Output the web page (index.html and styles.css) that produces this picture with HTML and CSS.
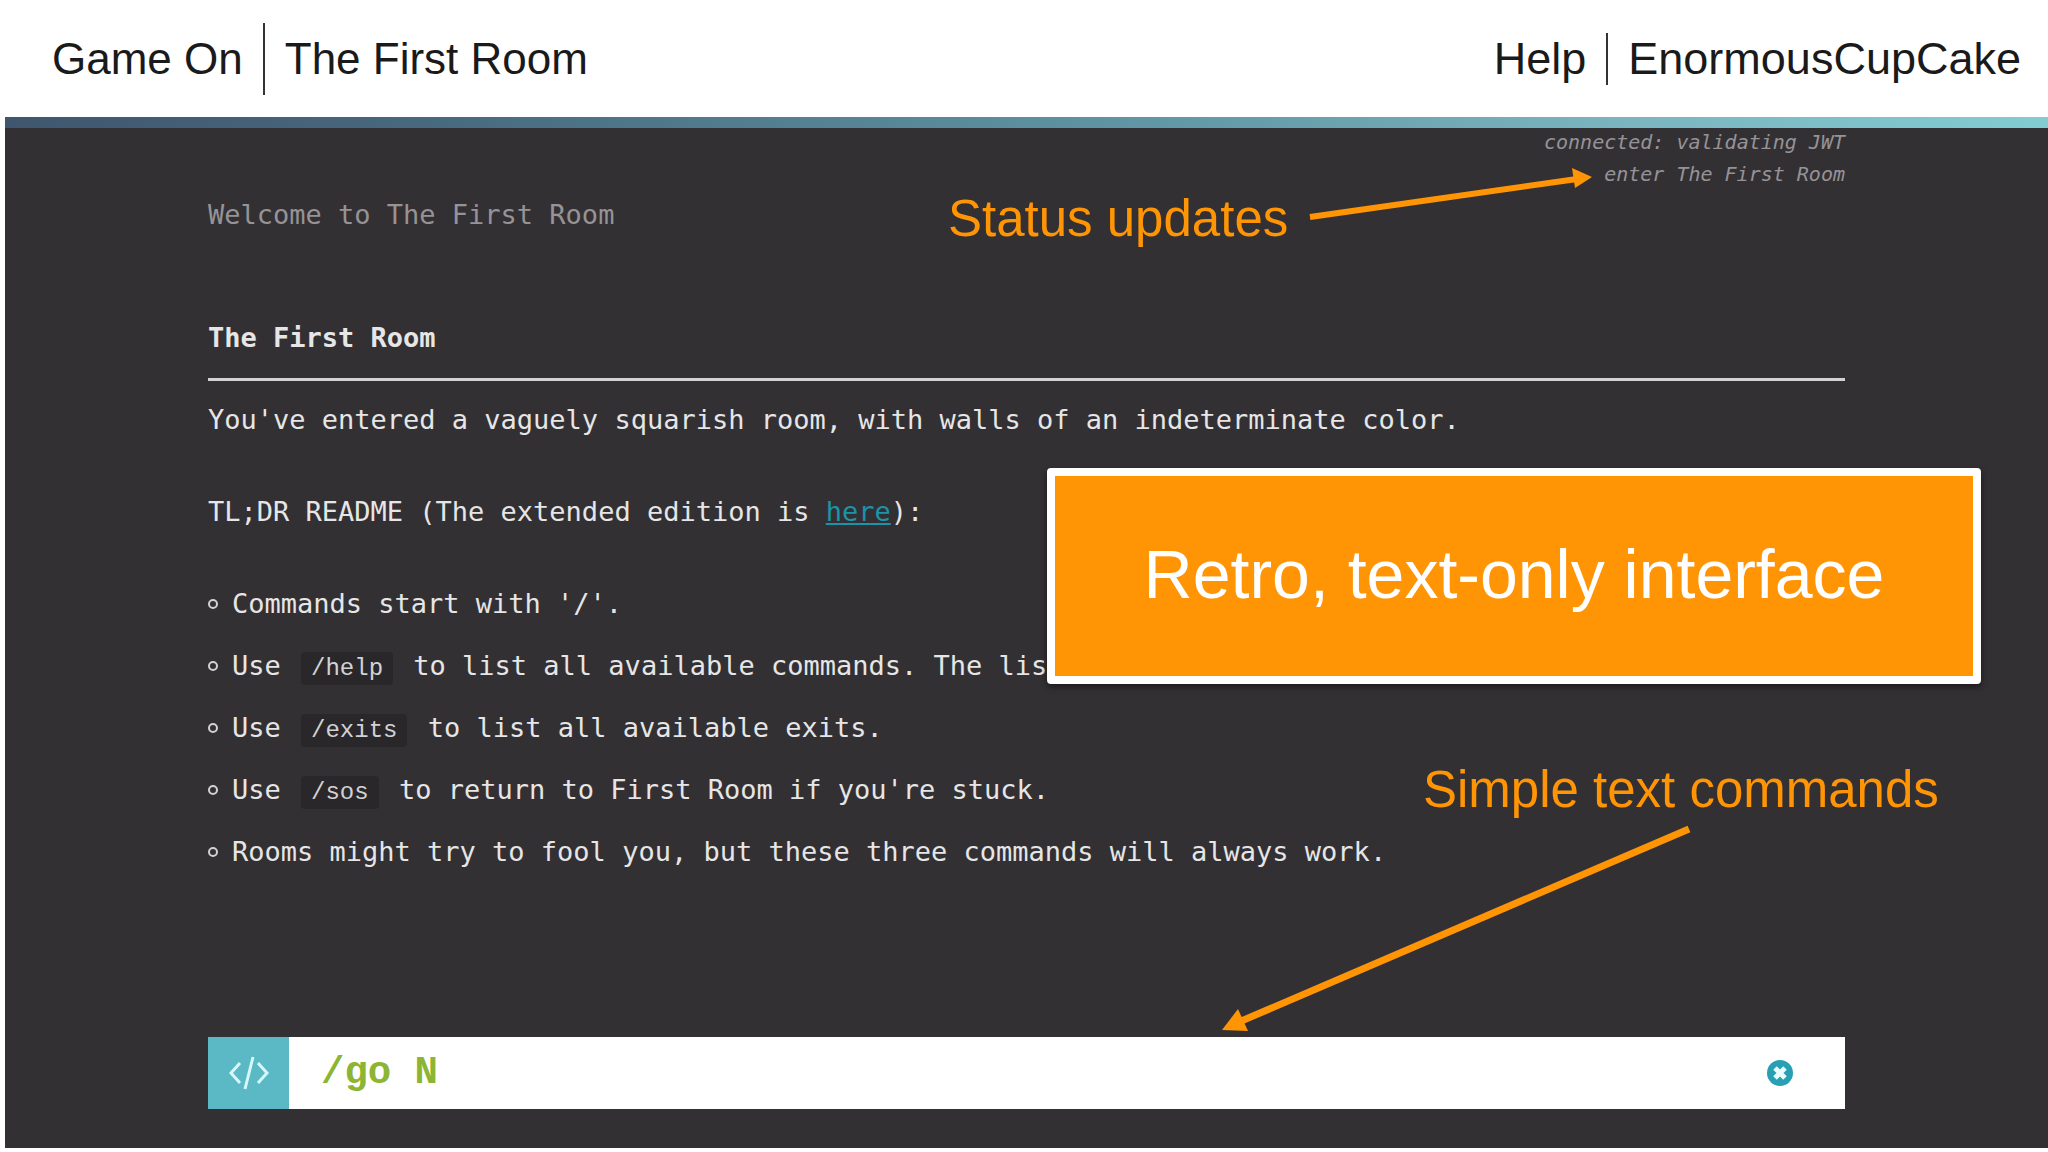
FILE: index.html
```html
<!DOCTYPE html>
<html lang="en">
<head>
  <meta charset="UTF-8">
  <meta name="viewport" content="width=device-width, initial-scale=1.0">
  <title>Game On - The First Room</title>
  <link rel="stylesheet" href="styles.css">
</head>
<body>
  <header class="topbar">
    <div class="topbar-group topbar-title">
      <span class="brand">Game On</span>
      <h1 class="room-name">The First Room</h1>
    </div>
    <nav class="topbar-group">
      <a class="nav-link" href="#help">Help</a>
      <a class="nav-link nav-user" href="#profile">EnormousCupCake</a>
    </nav>
  </header>

  <main class="terminal">
    <div class="status">
      <div>connected: validating JWT</div>
      <div>enter The First Room</div>
    </div>

    <p class="welcome">Welcome to The First Room</p>

    <h2 class="room-title">The First Room</h2>
    <p class="intro">You've entered a vaguely squarish room, with walls of an indeterminate color.</p>
    <p class="readme">TL;DR README (The extended edition is <a href="#readme">here</a>):</p>

    <ul class="commands">
      <li>Commands start with '/'.</li>
      <li>Use <code>/help</code> to list all available commands. The list</li>
      <li>Use <code>/exits</code> to list all available exits.</li>
      <li>Use <code>/sos</code> to return to First Room if you're stuck.</li>
      <li>Rooms might try to fool you, but these three commands will always work.</li>
    </ul>

    <form class="prompt">
      <label class="prompt-icon" for="command" aria-label="Command">
        <svg width="42" height="34" viewBox="0 0 42 34" fill="none" stroke="currentColor" stroke-width="3">
          <path d="M12 7 L3 17 L12 27 M30 7 L39 17 L30 27 M25 1 L17 33"/>
        </svg>
      </label>
      <input class="prompt-input" id="command" type="text" value="/go N" autocomplete="off" spellcheck="false">
      <button class="prompt-clear" type="reset" aria-label="Clear">
        <svg width="26" height="26" viewBox="0 0 26 26">
          <circle cx="13" cy="13" r="13" fill="#26a0b2"/>
          <path d="M8 8 L18 18 M18 8 L8 18" stroke="#e9fbfd" stroke-width="5"/>
        </svg>
      </button>
    </form>

    <!-- notes drawn over the terminal -->
    <div class="note note-status">Status updates</div>
    <svg class="arrow arrow-status" width="284" height="52" viewBox="0 0 284 52">
      <path d="M1 45 L268 7" stroke="#ff9505" stroke-width="6"/>
      <path d="M263 -4 L283 5 L266 16 Z" fill="#ff9505"/>
    </svg>

    <div class="callout">Retro, text-only interface</div>

    <div class="note note-commands">Simple text commands</div>
    <svg class="arrow arrow-commands" width="470" height="208" viewBox="0 0 470 208">
      <path d="M468 3 L18 196" stroke="#ff9505" stroke-width="7"/>
      <path d="M1 204 L17 183 L27 205 Z" fill="#ff9505"/>
    </svg>
  </main>
</body>
</html>
```

FILE: styles.css
```css
* {
  box-sizing: border-box;
}
body {
  display: flex;
  flex-direction: column;
  min-height: 100vh;
  margin: 0;
  background-color: #fff;
  font-family: "Liberation Sans", Arial, sans-serif;
}
h1, h2, p, ul {
  margin: 0;
  padding: 0;
  font-size: inherit;
  font-weight: normal;
}

/* header */
.topbar {
  display: flex;
  justify-content: space-between;
  align-items: center;
  height: 117px;
  padding: 0 27px 0 52px;
  font-size: 45px;
  line-height: 52px;
  color: #1a1a1a;
}
.topbar-group {
  display: flex;
  align-items: center;
}
.topbar-title {
  font-size: 44px;
}
.room-name {
  margin-left: 20px;
  padding-left: 20px;
  border-left: 2px solid #333;
  line-height: 72px;
}
.nav-link {
  color: inherit;
  text-decoration: none;
}
.nav-user {
  margin-left: 20px;
  padding-left: 20px;
  border-left: 2px solid #333;
}

/* terminal */
.terminal {
  position: relative;
  display: flex;
  flex-direction: column;
  flex: 1;
  margin: 0 0 4px 5px;
  padding: 0 203px 39px;
  background-color: #333034;
  font-family: "DejaVu Sans Mono", monospace;
  font-size: 27px;
  line-height: 34px;
  color: #e6e6e6;
}
.terminal::before {
  content: "";
  height: 11px;
  margin: 0 -203px;
  background: linear-gradient(to right, #40566f, #47687f 20%, #5f95a4 55%, #7ab3c0 78%, #82ccd2);
}
.status {
  display: flex;
  flex-direction: column;
  gap: 4px;
  font-size: 20px;
  line-height: 28px;
  font-style: italic;
  text-align: right;
  color: #969396;
}
.welcome {
  margin-top: 10px;
  color: #969396;
}
.room-title {
  margin-top: 89px;
  padding-bottom: 23px;
  border-bottom: 3px solid #d2d2d2;
  font-weight: bold;
}
.intro {
  margin-top: 22px;
}
.readme {
  margin-top: 58px;
}
.readme a {
  color: #1b93a8;
}
.commands {
  display: flex;
  flex-direction: column;
  gap: 28px;
  margin-top: 58px;
  list-style: none;
}
.commands li {
  position: relative;
  padding-left: 24px;
  white-space: nowrap;
}
.commands li::before {
  content: "";
  position: absolute;
  left: 0;
  top: 12px;
  width: 10px;
  height: 10px;
  box-sizing: border-box;
  border: 2px solid #d2d2d2;
  border-radius: 50%;
}
.commands code {
  margin: 0 4px;
  padding: 3px 10px;
  border-radius: 4px;
  background-color: #2a272b;
  font-family: "Liberation Mono", monospace;
  font-size: 24px;
  line-height: 24px;
  color: #d2d2d2;
}

/* command line */
.prompt {
  display: flex;
  height: 72px;
  margin-top: auto;
  background-color: #fff;
}
.prompt-icon {
  display: flex;
  align-items: center;
  justify-content: center;
  width: 81px;
  background-color: #5bb9c5;
  color: #d5f8fa;
}
.prompt-input {
  flex: 1;
  min-width: 0;
  padding: 0 32px;
  border: none;
  outline: none;
  background: none;
  font-family: "Liberation Mono", monospace;
  font-size: 39px;
  font-weight: bold;
  color: #8cb533;
}
.prompt-clear {
  display: flex;
  align-items: center;
  padding: 0 52px;
  border: none;
  background: none;
  cursor: pointer;
}

/* notes */
.note {
  position: absolute;
  font-family: "Liberation Sans", Arial, sans-serif;
  font-size: 51px;
  line-height: 60px;
  white-space: nowrap;
  color: #ff9505;
}
.note-status {
  left: 943px;
  top: 72px;
}
.note-commands {
  left: 1418px;
  top: 643px;
}
.arrow {
  position: absolute;
  overflow: visible;
}
.arrow-status {
  left: 1304px;
  top: 55px;
}
.arrow-commands {
  left: 1216px;
  top: 709px;
}
.callout {
  position: absolute;
  left: 1042px;
  top: 351px;
  display: flex;
  align-items: center;
  justify-content: center;
  width: 934px;
  height: 216px;
  padding-bottom: 4px;
  border: 8px solid #fff;
  border-radius: 4px;
  background-color: #ff9505;
  box-shadow: 0 3px 6px rgba(0, 0, 0, 0.5);
  font-family: "Liberation Sans", Arial, sans-serif;
  font-size: 68px;
  line-height: 78px;
  white-space: nowrap;
  color: #fff;
}
```
